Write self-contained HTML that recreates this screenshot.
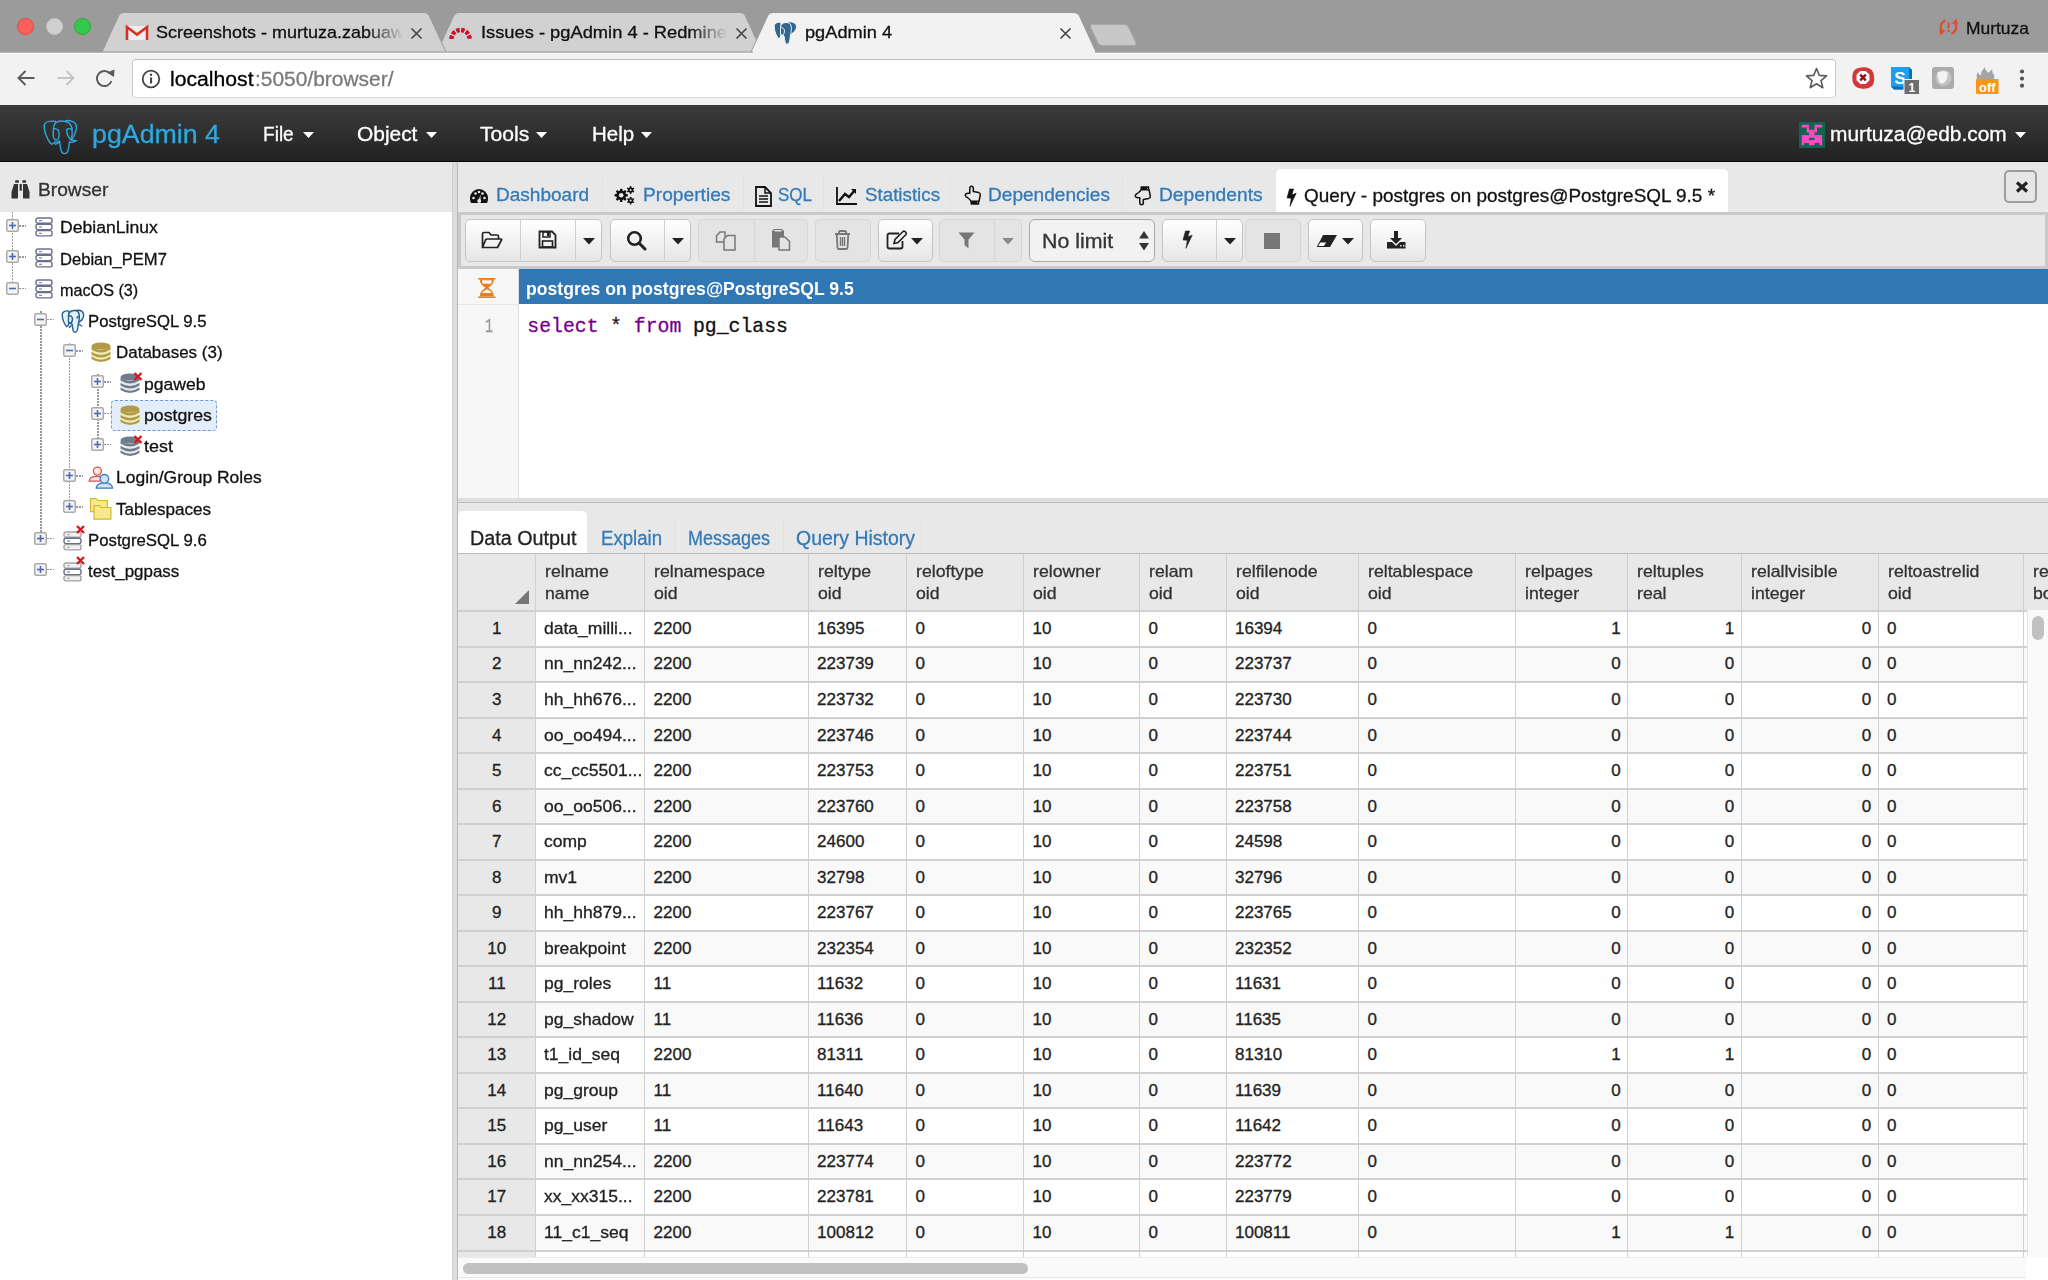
<!DOCTYPE html><html><head><meta charset="utf-8"><style>
html,body{margin:0;padding:0;width:2048px;height:1280px;overflow:hidden;background:#fff;font-family:"Liberation Sans",sans-serif}
.t{position:absolute;white-space:nowrap;line-height:1;transform-origin:0 0;-webkit-text-stroke:0.3px currentColor}
.r{position:absolute;box-sizing:border-box}
svg.r{overflow:visible}
</style></head><body>
<div class="r" style="left:0px;top:0px;width:2048px;height:52px;background:#9b9b9b"></div>
<div class="r" style="left:17.1px;top:18.3px;width:17px;height:17px;border-radius:50%;background:#fc605c;border:0.5px solid #e2463f"></div>
<div class="r" style="left:45.5px;top:18.3px;width:17px;height:17px;border-radius:50%;background:#d0d0d0;border:0.5px solid #c4c4c4"></div>
<div class="r" style="left:74.0px;top:18.3px;width:17px;height:17px;border-radius:50%;background:#34c84a;border:0.5px solid #28a83a"></div>
<svg class="r" style="left:0px;top:0px;" width="2048" height="53" viewBox="0 0 2048 53"><path d="M437,52 454,15 Q456,12.5 459,12.5 L740,12.5 Q743,12.5 745,15 L762,52 Z" fill="#d1d1d1" stroke="#9a9a9a" stroke-width="1"/></svg>
<svg class="r" style="left:0px;top:0px;" width="2048" height="53" viewBox="0 0 2048 53"><path d="M102,52 119,15 Q121,12.5 124,12.5 L424,12.5 Q427,12.5 429,15 L446,52 Z" fill="#d1d1d1" stroke="#9a9a9a" stroke-width="1"/></svg>
<svg class="r" style="left:1090px;top:23px;" width="48" height="24" viewBox="0 0 48 24"><path d="M2,1.5 L34,1.5 Q37,1.5 38.5,4 L46,20 Q47,22.5 44,22.5 L12,22.5 Q9,22.5 8,20 L0.5,4 Q0,1.5 2,1.5Z" fill="#c7c7c7" stroke="#a9a9a9" stroke-width="1"/></svg>
<svg class="r" style="left:0px;top:0px;" width="2048" height="53" viewBox="0 0 2048 53"><path d="M751,52 768,15 Q770,12.5 773,12.5 L1074,12.5 Q1077,12.5 1079,15 L1096,52 Z" fill="#f2f2f2" stroke="#999" stroke-width="1"/></svg>
<div class="r" style="left:0px;top:52px;width:2048px;height:53px;background:#f2f2f2;border-top:1px solid #b8b8b8;box-shadow:inset 0 1px 0 #fbfbfb"></div>
<div class="r" style="left:752.5px;top:51px;width:342px;height:3px;background:#f2f2f2"></div>
<svg class="r" style="left:126px;top:25px;" width="22" height="16" viewBox="0 0 22 16"><rect x="1" y="1" width="20" height="14" fill="#eee"/><path d="M1,15 V2 L11,9.5 L21,2 V15" fill="none" stroke="#d93025" stroke-width="2.6" stroke-linejoin="miter"/></svg>
<div class="t" style="left:156.00px;top:23.55px;font-size:17px;color:#111;transform:scaleX(1.0583);-webkit-mask-image:linear-gradient(90deg,#000 85%,transparent 100%)">Screenshots - murtuza.zabuaw</div>
<svg class="r" style="left:410px;top:27px;" width="13" height="13" viewBox="0 0 13 13"><path d="M1.5,1.5 L11.5,11.5 M11.5,1.5 L1.5,11.5" stroke="#444" stroke-width="1.6"/></svg>
<svg class="r" style="left:449px;top:23px;" width="24" height="17" viewBox="0 0 24 17"><path d="M2.5,16 A9,9 0 0 1 20.5,16" fill="none" stroke="#c8102e" stroke-width="4.5" stroke-dasharray="3.4 1.5"/></svg>
<div class="t" style="left:481.00px;top:23.55px;font-size:17px;color:#111;transform:scaleX(1.0759);-webkit-mask-image:linear-gradient(90deg,#000 85%,transparent 100%)">Issues - pgAdmin 4 - Redmine</div>
<svg class="r" style="left:735px;top:27px;" width="13" height="13" viewBox="0 0 13 13"><path d="M1.5,1.5 L11.5,11.5 M11.5,1.5 L1.5,11.5" stroke="#444" stroke-width="1.6"/></svg>
<svg class="r" style="left:773px;top:21px;" width="25" height="24" viewBox="0 0 25 24"><g fill="#336791" stroke="#fff" stroke-width="0.9" stroke-linejoin="round"><path d="M8,1.5 C4,0.5 1,2.5 1.2,6 C1.5,11 3.5,15 5.5,17.5 C6.5,18 7.5,16 7.8,15 Z"/><path d="M15,1 C18,0.5 22.5,1 23.5,5 C24,8 21,11.5 19,12.5 L17.5,14 Z"/><path d="M7.5,7.5 C7.5,4 9,1.8 13,1.5 C16.5,1.3 18,3 18.3,6 C18.6,9 18,12 17.5,14 C17,17 17,20 16,22 C15,23.7 13,23.7 12.3,22 C11.5,19.5 11.5,17 11,15 C10,14 8,14 7.5,13 Z"/><path d="M7.5,7 C9,6.5 10.5,7 11.2,8.5 C11.8,10.5 11.3,12.8 10,14" fill="none"/></g></svg>
<div class="t" style="left:805.00px;top:23.95px;font-size:17px;color:#111;transform:scaleX(1.0706);">pgAdmin 4</div>
<svg class="r" style="left:1059px;top:27px;" width="13" height="13" viewBox="0 0 13 13"><path d="M1.5,1.5 L11.5,11.5 M11.5,1.5 L1.5,11.5" stroke="#444" stroke-width="1.6"/></svg>
<svg class="r" style="left:1938px;top:17px;" width="22" height="20" viewBox="0 0 22 20"><g fill="#e24b36"><path d="M7.5,3.5 C3,5 1.5,10 4,14.5" fill="none" stroke="#e24b36" stroke-width="2.2"/><path d="M1,12.5 L7.5,13.5 L2.5,18.5 Z"/><path d="M13.5,16.5 C18,15 19.5,10 17,5.5" fill="none" stroke="#e24b36" stroke-width="2.2"/><path d="M20,7.5 L13.5,6.5 L18.5,1.5Z"/><rect x="9.6" y="5.5" width="2" height="6"/><circle cx="10.6" cy="14" r="1.2"/></g></svg>
<div class="t" style="left:1966.00px;top:19.55px;font-size:17px;color:#111;transform:scaleX(1.0251);">Murtuza</div>
<svg class="r" style="left:16px;top:69px;" width="20" height="18" viewBox="0 0 20 18"><path d="M18.5,9 H2.5 M9.5,2 L2.5,9 L9.5,16" fill="none" stroke="#5a5a5a" stroke-width="1.9"/></svg>
<svg class="r" style="left:56px;top:69px;" width="20" height="18" viewBox="0 0 20 18"><path d="M1.5,9 H17.5 M10.5,2 L17.5,9 L10.5,16" fill="none" stroke="#c4c4c4" stroke-width="1.9"/></svg>
<svg class="r" style="left:96px;top:69px;" width="20" height="20" viewBox="0 0 20 20"><path d="M15.5,12 A7.5,7.5 0 1 1 14,4.5" fill="none" stroke="#5a5a5a" stroke-width="1.9"/><path d="M11,3.5 L18.5,0.5 L18,8 Z" fill="#5a5a5a"/></svg>
<div class="r" style="left:132px;top:59px;width:1704px;height:38.5px;background:#fff;border:1px solid #c9c9c9;border-top-color:#bdbdbd;border-bottom-color:#d9d9d9;border-radius:4px"></div>
<svg class="r" style="left:141px;top:69px;" width="20" height="20" viewBox="0 0 20 20"><circle cx="10" cy="10" r="8.3" fill="none" stroke="#444" stroke-width="1.8"/><rect x="9" y="8.5" width="2.1" height="6" fill="#444"/><circle cx="10" cy="5.8" r="1.2" fill="#444"/></svg>
<div class="t" style="left:170.00px;top:69.83px;font-size:19.5px;color:#000;transform:scaleX(1.0854);">localhost</div>
<div class="t" style="left:254.50px;top:69.83px;font-size:19.5px;color:#7a7a7a;transform:scaleX(1.0737);">:5050/browser/</div>
<svg class="r" style="left:1805px;top:67px;" width="23" height="22" viewBox="0 0 23 22"><path d="M11.5,1.5 L14.3,8.4 L21.6,8.9 L16,13.6 L17.8,20.7 L11.5,16.8 L5.2,20.7 L7,13.6 L1.4,8.9 L8.7,8.4 Z" fill="none" stroke="#5a5a5a" stroke-width="1.6" stroke-linejoin="round"/></svg>
<svg class="r" style="left:1851px;top:66px;" width="24" height="24" viewBox="0 0 24 24"><path d="M10,1.5 Q19,0.5 22,6 Q24.5,13 22,19 Q18,23.5 10,22.5 Q3,22 1.5,15 Q0.5,7 4,3.5 Q6,1.8 10,1.5Z" fill="#d2373c"/><path d="M9.3,5 H14.7 L18.5,8.8 V14.2 L14.7,18 H9.3 L5.5,14.2 V8.8 Z" fill="#fff"/><path d="M9.2,8.7 L14.8,14.3 M14.8,8.7 L9.2,14.3" stroke="#8d1116" stroke-width="2.4"/></svg>
<svg class="r" style="left:1890px;top:66px;" width="32" height="30" viewBox="0 0 32 30"><path d="M1,1 H19 L22,4 V21 L19,23.5 H4 L1,20.5 Z" fill="#1aa0ee"/><path d="M1,20.5 L4,23.5 H19 L22,21 V4 L19,1 V20.5 Z" fill="#0e6bb0"/><text x="10" y="17.5" font-family="Liberation Sans" font-weight="700" font-size="17" fill="#fff" text-anchor="middle">S</text><rect x="14" y="13.5" width="15.5" height="15" rx="1" fill="#6e6e6e" stroke="#f2f2f2" stroke-width="1"/><text x="21.8" y="26" font-family="Liberation Sans" font-weight="700" font-size="12" fill="#fff" text-anchor="middle">1</text></svg>
<svg class="r" style="left:1931px;top:66px;" width="24" height="24" viewBox="0 0 24 24"><rect x="1" y="1" width="22" height="22" rx="3" fill="#ababab"/><circle cx="12.5" cy="12" r="8" fill="#c4c4c4"/><path d="M6.5,6.5 Q12,4.5 16.5,6 Q17,12 14,16 Q12,18 9,17 Q6,12 6.5,6.5Z" fill="#f4f4f4"/></svg>
<svg class="r" style="left:1972px;top:66px;" width="30" height="30" viewBox="0 0 30 30"><path d="M6,15 Q3,10 6,6 Q6.5,9 8.5,9.5 Q9,5 12.5,1.5 Q14,5 16.5,7 Q18.5,4 20,3.5 Q20,7 22,8.5 Q23,11 21,15Z" fill="#a4a4a4"/><rect x="4" y="13" width="22.5" height="15" rx="1" fill="#f7941e"/><text x="15.3" y="25.5" font-family="Liberation Sans" font-weight="700" font-size="13" fill="#fff" text-anchor="middle">off</text></svg>
<svg class="r" style="left:2017px;top:69px;" width="10" height="20" viewBox="0 0 10 20"><circle cx="5" cy="2.5" r="2.1" fill="#555"/><circle cx="5" cy="9.6" r="2.1" fill="#555"/><circle cx="5" cy="16.7" r="2.1" fill="#555"/></svg>
<div class="r" style="left:0px;top:105px;width:2048px;height:57px;background:linear-gradient(#3c3c3c,#222);border-bottom:1px solid #080808"></div>
<svg class="r" style="left:38px;top:114px;" width="48" height="46" viewBox="0 0 48 46"><g fill="none" stroke="#2ea8df" stroke-width="1.35" stroke-linecap="round" stroke-linejoin="round"><path d="M17.5,7.5 C12,6.5 7,7.5 6.3,11 C5.5,16 9,25 12.6,29.5 C14,31 16,29 17,27.5"/><path d="M15.5,15 C15.5,9 19,7 23.5,7 C29,7 33,9.5 34,14 C34.5,18 34,23 33.3,26"/><path d="M27.5,6.8 C31,6 36.5,7 38,10.5 C39.5,14 37,21 33.5,26 C35,26.5 37.5,27 38.5,26.5 C37,28 33,29 31.5,28"/><path d="M21.5,27.5 C22,31 22.5,36 24,38.5 C25.5,40 28,40 29.5,38 C31,35 31,31 31.5,28"/><path d="M15.5,15 C16,14.5 19,14.5 20.5,16.5 C21.5,19 21,24 20,25.5 C18.5,26.5 16.5,26 15.5,23.5 C15,21 15.2,17 15.5,15"/><path d="M16,29.5 L21.5,27 M17.5,30.5 L22,28"/><path d="M28.5,15.5 C30,14.5 32.5,14.5 33.5,15.5 M29,16 C28.5,19 30,23 33,26"/></g></svg>
<div class="t" style="left:92.00px;top:122.44px;font-size:25.6px;color:#2ea8df;transform:scaleX(1.0460);">pgAdmin 4</div>
<div class="t" style="left:263.30px;top:124.00px;font-size:20px;color:#fff;transform:scaleX(0.9534);">File</div>
<svg class="r" style="left:303.0px;top:131.7px;" width="11" height="6" viewBox="0 0 11 6"><path d="M0,0 H11 L5.5,6 Z" fill="#fff"/></svg>
<div class="t" style="left:356.60px;top:124.00px;font-size:20px;color:#fff;transform:scaleX(1.0450);">Object</div>
<svg class="r" style="left:425.5px;top:131.7px;" width="11" height="6" viewBox="0 0 11 6"><path d="M0,0 H11 L5.5,6 Z" fill="#fff"/></svg>
<div class="t" style="left:479.70px;top:124.00px;font-size:20px;color:#fff;transform:scaleX(1.0557);">Tools</div>
<svg class="r" style="left:536.0px;top:131.7px;" width="11" height="6" viewBox="0 0 11 6"><path d="M0,0 H11 L5.5,6 Z" fill="#fff"/></svg>
<div class="t" style="left:591.50px;top:124.00px;font-size:20px;color:#fff;transform:scaleX(1.0219);">Help</div>
<svg class="r" style="left:641.0px;top:131.7px;" width="11" height="6" viewBox="0 0 11 6"><path d="M0,0 H11 L5.5,6 Z" fill="#fff"/></svg>
<svg class="r" style="left:1799px;top:122px;" width="26" height="26" viewBox="0 0 26 26"><rect width="26" height="26" fill="#116352"/><g fill="#fd4ac2"><rect x="2.75" y="2.75" width="7.25" height="2.75"/><rect x="15.5" y="2.75" width="7.6" height="2.75"/><rect x="7.75" y="5.5" width="2.25" height="5"/><rect x="15.5" y="5.5" width="2.5" height="5"/><rect x="10" y="7.75" width="5.5" height="5.5"/><rect x="2.75" y="13.1" width="20.35" height="7.9"/><rect x="2.75" y="21" width="2.25" height="2.25"/><rect x="10" y="21" width="5.5" height="2.25"/><rect x="20.5" y="21" width="2.6" height="2.25"/></g><rect x="10" y="15.75" width="5.5" height="2.35" fill="#116352"/></svg>
<div class="t" style="left:1830.00px;top:124.00px;font-size:20px;color:#fff;transform:scaleX(1.0437);">murtuza@edb.com</div>
<svg class="r" style="left:2015px;top:131.7px;" width="11" height="6" viewBox="0 0 11 6"><path d="M0,0 H11 L5.5,6 Z" fill="#fff"/></svg>
<div class="r" style="left:0px;top:162px;width:452px;height:50px;background:#e8e8e8"></div>
<svg class="r" style="left:6px;top:175px;" width="30" height="30" viewBox="0 0 30 30"><g fill="#333"><rect x="9.1" y="5.2" width="3.8" height="2.5" rx="0.8"/><rect x="16.3" y="5.2" width="3.8" height="2.5" rx="0.8"/><path d="M8,9 H12 V23.5 H5.5 V17 Z"/><path d="M17,9 H21 L23.5,17 V23.5 H17 Z"/><rect x="13.6" y="9" width="2.2" height="6.7"/></g></svg>
<div class="t" style="left:38.00px;top:181.28px;font-size:18.5px;color:#333;transform:scaleX(1.0369);">Browser</div>
<div class="r" style="left:452px;top:162px;width:6px;height:1118px;background:#dcdcdc;border-right:1.5px solid #b9b9b9;border-left:1px solid #d0d0d0"></div>
<div class="r" style="left:11.5px;top:212px;width:1.5px;height:70.10000000000002px;background-image:linear-gradient(#999 60%,transparent 60%);background-size:2px 3px"></div>
<div class="r" style="left:40px;top:311.35px;width:1.5px;height:220.75px;background-image:linear-gradient(#999 60%,transparent 60%);background-size:2px 3px"></div>
<div class="r" style="left:68.5px;top:342.6px;width:1.5px;height:158.25px;background-image:linear-gradient(#999 60%,transparent 60%);background-size:2px 3px"></div>
<div class="r" style="left:97px;top:373.85px;width:1.5px;height:64.5px;background-image:linear-gradient(#999 60%,transparent 60%);background-size:2px 3px"></div>
<div class="r" style="left:111.4px;top:400px;width:105.6px;height:30.5px;background:#e3eefa;border:1.5px dashed #6a9bd8;border-radius:4px"></div>
<svg class="r" style="left:6.0px;top:219.1px;" width="13" height="13" viewBox="0 0 13 13"><rect x="0.75" y="0.75" width="11.5" height="11.5" rx="1.5" fill="#f4f4f4" stroke="#a9a9a9" stroke-width="1.5"/><path d="M3,6.5 H10" stroke="#4d6ab3" stroke-width="1.6"/><path d="M6.5,3 V10" stroke="#4d6ab3" stroke-width="1.6"/></svg>
<div class="r" style="left:19.0px;top:225.1px;width:7px;height:1.5px;background-image:linear-gradient(90deg,#999 60%,transparent 60%);background-size:3px 2px"></div>
<svg class="r" style="left:35.0px;top:216.6px;" width="18" height="21" viewBox="0 0 18 21"><rect x="1" y="1.0" width="16" height="5.3" rx="2" fill="#fff" stroke="#6d6d8c" stroke-width="1.4"/><rect x="4" y="3.2" width="3" height="1" fill="#6d6d8c"/><rect x="1" y="7.3" width="16" height="5.3" rx="2" fill="#fff" stroke="#6d6d8c" stroke-width="1.4"/><rect x="4" y="9.5" width="3" height="1" fill="#6d6d8c"/><rect x="1" y="13.6" width="16" height="5.3" rx="2" fill="#fff" stroke="#6d6d8c" stroke-width="1.4"/><rect x="4" y="15.8" width="3" height="1" fill="#6d6d8c"/></svg>
<div class="t" style="left:60.00px;top:219.28px;font-size:17.2px;color:#111;transform:scaleX(1.0237);">DebianLinux</div>
<svg class="r" style="left:6.0px;top:250.35000000000002px;" width="13" height="13" viewBox="0 0 13 13"><rect x="0.75" y="0.75" width="11.5" height="11.5" rx="1.5" fill="#f4f4f4" stroke="#a9a9a9" stroke-width="1.5"/><path d="M3,6.5 H10" stroke="#4d6ab3" stroke-width="1.6"/><path d="M6.5,3 V10" stroke="#4d6ab3" stroke-width="1.6"/></svg>
<div class="r" style="left:19.0px;top:256.35px;width:7px;height:1.5px;background-image:linear-gradient(90deg,#999 60%,transparent 60%);background-size:3px 2px"></div>
<svg class="r" style="left:35.0px;top:247.85000000000002px;" width="18" height="21" viewBox="0 0 18 21"><rect x="1" y="1.0" width="16" height="5.3" rx="2" fill="#fff" stroke="#6d6d8c" stroke-width="1.4"/><rect x="4" y="3.2" width="3" height="1" fill="#6d6d8c"/><rect x="1" y="7.3" width="16" height="5.3" rx="2" fill="#fff" stroke="#6d6d8c" stroke-width="1.4"/><rect x="4" y="9.5" width="3" height="1" fill="#6d6d8c"/><rect x="1" y="13.6" width="16" height="5.3" rx="2" fill="#fff" stroke="#6d6d8c" stroke-width="1.4"/><rect x="4" y="15.8" width="3" height="1" fill="#6d6d8c"/></svg>
<div class="t" style="left:60.00px;top:250.53px;font-size:17.2px;color:#111;transform:scaleX(0.9645);">Debian_PEM7</div>
<svg class="r" style="left:6.0px;top:281.6px;" width="13" height="13" viewBox="0 0 13 13"><rect x="0.75" y="0.75" width="11.5" height="11.5" rx="1.5" fill="#f4f4f4" stroke="#a9a9a9" stroke-width="1.5"/><path d="M3,6.5 H10" stroke="#4d6ab3" stroke-width="1.6"/></svg>
<div class="r" style="left:19.0px;top:287.6px;width:7px;height:1.5px;background-image:linear-gradient(90deg,#999 60%,transparent 60%);background-size:3px 2px"></div>
<svg class="r" style="left:35.0px;top:279.1px;" width="18" height="21" viewBox="0 0 18 21"><rect x="1" y="1.0" width="16" height="5.3" rx="2" fill="#fff" stroke="#6d6d8c" stroke-width="1.4"/><rect x="4" y="3.2" width="3" height="1" fill="#6d6d8c"/><rect x="1" y="7.3" width="16" height="5.3" rx="2" fill="#fff" stroke="#6d6d8c" stroke-width="1.4"/><rect x="4" y="9.5" width="3" height="1" fill="#6d6d8c"/><rect x="1" y="13.6" width="16" height="5.3" rx="2" fill="#fff" stroke="#6d6d8c" stroke-width="1.4"/><rect x="4" y="15.8" width="3" height="1" fill="#6d6d8c"/></svg>
<div class="t" style="left:60.00px;top:281.78px;font-size:17.2px;color:#111;transform:scaleX(0.9415);">macOS (3)</div>
<svg class="r" style="left:34.3px;top:312.85px;" width="13" height="13" viewBox="0 0 13 13"><rect x="0.75" y="0.75" width="11.5" height="11.5" rx="1.5" fill="#f4f4f4" stroke="#a9a9a9" stroke-width="1.5"/><path d="M3,6.5 H10" stroke="#4d6ab3" stroke-width="1.6"/></svg>
<div class="r" style="left:47.3px;top:318.85px;width:7px;height:1.5px;background-image:linear-gradient(90deg,#999 60%,transparent 60%);background-size:3px 2px"></div>
<svg class="r" style="left:56px;top:303.65000000000003px;" width="34" height="32" viewBox="0 0 34 32"><g fill="#dff3fc" stroke="#2a5e8c" stroke-width="1.4" stroke-linejoin="round" stroke-linecap="round"><path d="M13,7.2 C9,6 6,8 6.2,11 C6.5,16 8.5,20 10.5,22.5 C11.5,23 12.5,21 12.8,20 Z"/><path d="M20,6.5 C23,6 26.5,6.5 27.5,10 C28,13 26,16 24,17.5 L22.5,19 L21.5,13 Z"/><path d="M12.5,12.5 C12.5,9 14,6.8 18,6.5 C21.5,6.3 23,8 23.3,11 C23.6,14 23,17 22.5,19 C22,22 22,25 21,27 C20,28.7 18,28.7 17.3,27 C16.5,24.5 16.5,22 16,20 C15,19 13,19 12.5,18 Z"/><path d="M12.5,12 C14,11.5 15.5,12 16.2,13.5 C16.8,15.5 16.3,17.8 15,19 C14,19.5 13,19 12.5,18.5" fill="none"/><path d="M21,14 C21.5,12.5 22.5,12.3 23.3,12.5" fill="none"/><path d="M13.5,23.5 L15,21.5 M23,20.5 L25.8,22" fill="none"/></g></svg>
<div class="t" style="left:88.10px;top:313.03px;font-size:17.2px;color:#111;transform:scaleX(0.9747);">PostgreSQL 9.5</div>
<svg class="r" style="left:62.6px;top:344.1px;" width="13" height="13" viewBox="0 0 13 13"><rect x="0.75" y="0.75" width="11.5" height="11.5" rx="1.5" fill="#f4f4f4" stroke="#a9a9a9" stroke-width="1.5"/><path d="M3,6.5 H10" stroke="#4d6ab3" stroke-width="1.6"/></svg>
<div class="r" style="left:75.6px;top:350.1px;width:7px;height:1.5px;background-image:linear-gradient(90deg,#999 60%,transparent 60%);background-size:3px 2px"></div>
<svg class="r" style="left:91.4px;top:342.1px;" width="22" height="22" viewBox="0 0 22 22"><path d="M0.5,4 V15 Q10,21 19.5,15 V4 Z" fill="#f1e9b8"/><ellipse cx="10" cy="4" rx="9.5" ry="3.6" fill="#b09a45"/><path d="M0.5,5 Q10,11 19.5,5 V7.5 Q10,13.5 0.5,7.5 Z" fill="#b09a45"/><path d="M0.5,10 Q10,16 19.5,10 V12.5 Q10,18.5 0.5,12.5 Z" fill="#b09a45"/><path d="M0.5,14.5 Q10,21 19.5,14.5 V17 Q10,23 0.5,17 Z" fill="#b09a45"/></svg>
<div class="t" style="left:116.20px;top:344.28px;font-size:17.2px;color:#111;transform:scaleX(0.9869);">Databases (3)</div>
<svg class="r" style="left:90.9px;top:375.35px;" width="13" height="13" viewBox="0 0 13 13"><rect x="0.75" y="0.75" width="11.5" height="11.5" rx="1.5" fill="#f4f4f4" stroke="#a9a9a9" stroke-width="1.5"/><path d="M3,6.5 H10" stroke="#4d6ab3" stroke-width="1.6"/><path d="M6.5,3 V10" stroke="#4d6ab3" stroke-width="1.6"/></svg>
<div class="r" style="left:103.9px;top:381.35px;width:7px;height:1.5px;background-image:linear-gradient(90deg,#999 60%,transparent 60%);background-size:3px 2px"></div>
<svg class="r" style="left:119.6px;top:373.35px;" width="22" height="22" viewBox="0 0 22 22"><path d="M0.5,4 V15 Q10,21 19.5,15 V4 Z" fill="#e8ecef"/><ellipse cx="10" cy="4" rx="9.5" ry="3.6" fill="#6f7d8b"/><path d="M0.5,5 Q10,11 19.5,5 V7.5 Q10,13.5 0.5,7.5 Z" fill="#6f7d8b"/><path d="M0.5,10 Q10,16 19.5,10 V12.5 Q10,18.5 0.5,12.5 Z" fill="#6f7d8b"/><path d="M0.5,14.5 Q10,21 19.5,14.5 V17 Q10,23 0.5,17 Z" fill="#6f7d8b"/><path d="M14.5,0 L21.5,7 M21.5,0 L14.5,7" stroke="#d9161e" stroke-width="2.4"/></svg>
<div class="t" style="left:144.30px;top:375.53px;font-size:17.2px;color:#111;transform:scaleX(1.0201);">pgaweb</div>
<svg class="r" style="left:90.9px;top:406.6px;" width="13" height="13" viewBox="0 0 13 13"><rect x="0.75" y="0.75" width="11.5" height="11.5" rx="1.5" fill="#f4f4f4" stroke="#a9a9a9" stroke-width="1.5"/><path d="M3,6.5 H10" stroke="#4d6ab3" stroke-width="1.6"/><path d="M6.5,3 V10" stroke="#4d6ab3" stroke-width="1.6"/></svg>
<div class="r" style="left:103.9px;top:412.6px;width:7px;height:1.5px;background-image:linear-gradient(90deg,#999 60%,transparent 60%);background-size:3px 2px"></div>
<svg class="r" style="left:120.1px;top:404.6px;" width="22" height="22" viewBox="0 0 22 22"><path d="M0.5,4 V15 Q10,21 19.5,15 V4 Z" fill="#f1e9b8"/><ellipse cx="10" cy="4" rx="9.5" ry="3.6" fill="#b09a45"/><path d="M0.5,5 Q10,11 19.5,5 V7.5 Q10,13.5 0.5,7.5 Z" fill="#b09a45"/><path d="M0.5,10 Q10,16 19.5,10 V12.5 Q10,18.5 0.5,12.5 Z" fill="#b09a45"/><path d="M0.5,14.5 Q10,21 19.5,14.5 V17 Q10,23 0.5,17 Z" fill="#b09a45"/></svg>
<div class="t" style="left:144.30px;top:406.78px;font-size:17.2px;color:#111;transform:scaleX(1.0294);">postgres</div>
<svg class="r" style="left:90.9px;top:437.85px;" width="13" height="13" viewBox="0 0 13 13"><rect x="0.75" y="0.75" width="11.5" height="11.5" rx="1.5" fill="#f4f4f4" stroke="#a9a9a9" stroke-width="1.5"/><path d="M3,6.5 H10" stroke="#4d6ab3" stroke-width="1.6"/><path d="M6.5,3 V10" stroke="#4d6ab3" stroke-width="1.6"/></svg>
<div class="r" style="left:103.9px;top:443.85px;width:7px;height:1.5px;background-image:linear-gradient(90deg,#999 60%,transparent 60%);background-size:3px 2px"></div>
<svg class="r" style="left:119.6px;top:435.85px;" width="22" height="22" viewBox="0 0 22 22"><path d="M0.5,4 V15 Q10,21 19.5,15 V4 Z" fill="#e8ecef"/><ellipse cx="10" cy="4" rx="9.5" ry="3.6" fill="#6f7d8b"/><path d="M0.5,5 Q10,11 19.5,5 V7.5 Q10,13.5 0.5,7.5 Z" fill="#6f7d8b"/><path d="M0.5,10 Q10,16 19.5,10 V12.5 Q10,18.5 0.5,12.5 Z" fill="#6f7d8b"/><path d="M0.5,14.5 Q10,21 19.5,14.5 V17 Q10,23 0.5,17 Z" fill="#6f7d8b"/><path d="M14.5,0 L21.5,7 M21.5,0 L14.5,7" stroke="#d9161e" stroke-width="2.4"/></svg>
<div class="t" style="left:144.30px;top:438.03px;font-size:17.2px;color:#111;transform:scaleX(1.0436);">test</div>
<svg class="r" style="left:62.6px;top:469.1px;" width="13" height="13" viewBox="0 0 13 13"><rect x="0.75" y="0.75" width="11.5" height="11.5" rx="1.5" fill="#f4f4f4" stroke="#a9a9a9" stroke-width="1.5"/><path d="M3,6.5 H10" stroke="#4d6ab3" stroke-width="1.6"/><path d="M6.5,3 V10" stroke="#4d6ab3" stroke-width="1.6"/></svg>
<div class="r" style="left:75.6px;top:475.1px;width:7px;height:1.5px;background-image:linear-gradient(90deg,#999 60%,transparent 60%);background-size:3px 2px"></div>
<svg class="r" style="left:86px;top:462px;" width="30" height="30" viewBox="0 0 30 30"><path d="M3.2,19.1 Q3.5,14.4 11.4,14.4 Q17,14.4 17.5,19.1 Z" fill="#fde6e6" stroke="#d9534f" stroke-width="1.3"/><circle cx="11.4" cy="9.1" r="4" fill="#fde6e6" stroke="#d9534f" stroke-width="1.3"/><path d="M10.2,26.1 Q10.8,20.9 18.4,20.9 Q26,20.9 26.6,26.1 Z" fill="#cfe3f7" stroke="#3b7bc8" stroke-width="1.3"/><circle cx="18.4" cy="16.8" r="4.3" fill="#cfe3f7" stroke="#3b7bc8" stroke-width="1.3"/></svg>
<div class="t" style="left:116.20px;top:469.28px;font-size:17.2px;color:#111;transform:scaleX(1.0164);">Login/Group Roles</div>
<svg class="r" style="left:62.6px;top:500.35px;" width="13" height="13" viewBox="0 0 13 13"><rect x="0.75" y="0.75" width="11.5" height="11.5" rx="1.5" fill="#f4f4f4" stroke="#a9a9a9" stroke-width="1.5"/><path d="M3,6.5 H10" stroke="#4d6ab3" stroke-width="1.6"/><path d="M6.5,3 V10" stroke="#4d6ab3" stroke-width="1.6"/></svg>
<div class="r" style="left:75.6px;top:506.35px;width:7px;height:1.5px;background-image:linear-gradient(90deg,#999 60%,transparent 60%);background-size:3px 2px"></div>
<svg class="r" style="left:86px;top:494px;" width="30" height="30" viewBox="0 0 30 30"><path d="M4.5,4.7 H10 L11.5,6.5 H21.3 V17.6 H4.5 Z" fill="#f7e98c" stroke="#d2b93a" stroke-width="1.2"/><path d="M8,11.7 H13.5 L15,13.5 H24.9 V25.2 H8 Z" fill="#f7e98c" stroke="#d2b93a" stroke-width="1.2"/></svg>
<div class="t" style="left:116.20px;top:500.53px;font-size:17.2px;color:#111;transform:scaleX(0.9955);">Tablespaces</div>
<svg class="r" style="left:34.3px;top:531.6px;" width="13" height="13" viewBox="0 0 13 13"><rect x="0.75" y="0.75" width="11.5" height="11.5" rx="1.5" fill="#f4f4f4" stroke="#a9a9a9" stroke-width="1.5"/><path d="M3,6.5 H10" stroke="#4d6ab3" stroke-width="1.6"/><path d="M6.5,3 V10" stroke="#4d6ab3" stroke-width="1.6"/></svg>
<div class="r" style="left:47.3px;top:537.6px;width:7px;height:1.5px;background-image:linear-gradient(90deg,#999 60%,transparent 60%);background-size:3px 2px"></div>
<svg class="r" style="left:62.7px;top:530.6px;" width="19" height="21" viewBox="0 0 19 21"><rect x="1" y="1.0" width="17" height="5.3" rx="2" fill="#f2f2f2" stroke="#a3a3a3" stroke-width="1.4"/><rect x="4" y="3.2" width="3" height="1" fill="#a3a3a3"/><rect x="1" y="7.3" width="17" height="5.3" rx="2" fill="#fff" stroke="#6d6d8c" stroke-width="1.4"/><rect x="4" y="9.5" width="3" height="1" fill="#6d6d8c"/><rect x="1" y="13.6" width="17" height="5.3" rx="2" fill="#f2f2f2" stroke="#a3a3a3" stroke-width="1.4"/><rect x="4" y="15.8" width="3" height="1" fill="#a3a3a3"/></svg>
<svg class="r" style="left:75.7px;top:525.1px;" width="9" height="9" viewBox="0 0 9 9"><path d="M1,1 L8,8 M8,1 L1,8" stroke="#d9161e" stroke-width="2.4"/></svg>
<div class="t" style="left:88.10px;top:531.78px;font-size:17.2px;color:#111;transform:scaleX(0.9764);">PostgreSQL 9.6</div>
<svg class="r" style="left:34.3px;top:562.85px;" width="13" height="13" viewBox="0 0 13 13"><rect x="0.75" y="0.75" width="11.5" height="11.5" rx="1.5" fill="#f4f4f4" stroke="#a9a9a9" stroke-width="1.5"/><path d="M3,6.5 H10" stroke="#4d6ab3" stroke-width="1.6"/><path d="M6.5,3 V10" stroke="#4d6ab3" stroke-width="1.6"/></svg>
<div class="r" style="left:47.3px;top:568.85px;width:7px;height:1.5px;background-image:linear-gradient(90deg,#999 60%,transparent 60%);background-size:3px 2px"></div>
<svg class="r" style="left:62.7px;top:561.85px;" width="19" height="21" viewBox="0 0 19 21"><rect x="1" y="1.0" width="17" height="5.3" rx="2" fill="#f2f2f2" stroke="#a3a3a3" stroke-width="1.4"/><rect x="4" y="3.2" width="3" height="1" fill="#a3a3a3"/><rect x="1" y="7.3" width="17" height="5.3" rx="2" fill="#fff" stroke="#6d6d8c" stroke-width="1.4"/><rect x="4" y="9.5" width="3" height="1" fill="#6d6d8c"/><rect x="1" y="13.6" width="17" height="5.3" rx="2" fill="#f2f2f2" stroke="#a3a3a3" stroke-width="1.4"/><rect x="4" y="15.8" width="3" height="1" fill="#a3a3a3"/></svg>
<svg class="r" style="left:75.7px;top:556.35px;" width="9" height="9" viewBox="0 0 9 9"><path d="M1,1 L8,8 M8,1 L1,8" stroke="#d9161e" stroke-width="2.4"/></svg>
<div class="t" style="left:88.10px;top:563.03px;font-size:17.2px;color:#111;transform:scaleX(0.9839);">test_pgpass</div>
<div class="r" style="left:458px;top:162px;width:1590px;height:50px;background:#e8e8e8"></div>
<div class="r" style="left:458px;top:211.5px;width:1590px;height:57.5px;background:#c9c9c9"></div>
<div class="r" style="left:461px;top:215px;width:1584px;height:50.8px;background:#e8e8e8"></div>
<div class="r" style="left:458px;top:269px;width:61px;height:229px;background:#f7f7f7;border-right:1px solid #ddd"></div>
<div class="r" style="left:519px;top:269px;width:1529px;height:35px;background:#3177b4"></div>
<div class="r" style="left:458px;top:303.5px;width:61px;height:1px;background:#e6e6e6"></div>
<div class="r" style="left:458px;top:498px;width:1590px;height:5px;background:#dedede;border-bottom:1px solid #c0c0c0"></div>
<div class="r" style="left:458px;top:503px;width:1590px;height:50.5px;background:#e8e8e8"></div>
<div class="r" style="left:458px;top:552.5px;width:1590px;height:2px;background:#bcbcbc"></div>
<div class="r" style="left:602px;top:177px;width:1px;height:35px;background:#e2e2e2"></div>
<div class="r" style="left:743px;top:177px;width:1px;height:35px;background:#e2e2e2"></div>
<div class="r" style="left:823px;top:177px;width:1px;height:35px;background:#e2e2e2"></div>
<div class="r" style="left:950px;top:177px;width:1px;height:35px;background:#e2e2e2"></div>
<div class="r" style="left:1122px;top:177px;width:1px;height:35px;background:#e2e2e2"></div>
<div class="r" style="left:1276px;top:169.3px;width:452px;height:43px;background:#fff;border-radius:5px 5px 0 0"></div>
<svg class="r" style="left:469px;top:188px;" width="20" height="16" viewBox="0 0 20 16"><path d="M10,1 A9,9 0 0 0 1,10 Q1,13 2,15 H18 Q19,13 19,10 A9,9 0 0 0 10,1Z" fill="#111"/><circle cx="4.5" cy="10" r="1.3" fill="#e8e8e8"/><circle cx="6.5" cy="5.5" r="1.3" fill="#e8e8e8"/><circle cx="10" cy="4" r="1.3" fill="#e8e8e8"/><circle cx="15.5" cy="10" r="1.3" fill="#e8e8e8"/><circle cx="13.5" cy="5.5" r="1.3" fill="#e8e8e8"/><path d="M9,14 L11.5,6.5 L11.5,14Z" fill="#e8e8e8"/><circle cx="10.2" cy="13" r="2" fill="#e8e8e8"/></svg>
<div class="t" style="left:496.00px;top:185.88px;font-size:18.5px;color:#337ab7;transform:scaleX(1.0280);">Dashboard</div>
<svg class="r" style="left:610px;top:182px;" width="30" height="28" viewBox="0 0 30 28"><circle cx="11.2" cy="13.3" r="4.9" fill="#111"/><rect x="10.00" y="6.70" width="2.4" height="2.50" rx="0.5" fill="#111" transform="rotate(0.0 11.2 13.3)"/><rect x="10.00" y="6.70" width="2.4" height="2.50" rx="0.5" fill="#111" transform="rotate(45.0 11.2 13.3)"/><rect x="10.00" y="6.70" width="2.4" height="2.50" rx="0.5" fill="#111" transform="rotate(90.0 11.2 13.3)"/><rect x="10.00" y="6.70" width="2.4" height="2.50" rx="0.5" fill="#111" transform="rotate(135.0 11.2 13.3)"/><rect x="10.00" y="6.70" width="2.4" height="2.50" rx="0.5" fill="#111" transform="rotate(180.0 11.2 13.3)"/><rect x="10.00" y="6.70" width="2.4" height="2.50" rx="0.5" fill="#111" transform="rotate(225.0 11.2 13.3)"/><rect x="10.00" y="6.70" width="2.4" height="2.50" rx="0.5" fill="#111" transform="rotate(270.0 11.2 13.3)"/><rect x="10.00" y="6.70" width="2.4" height="2.50" rx="0.5" fill="#111" transform="rotate(315.0 11.2 13.3)"/><circle cx="11.2" cy="13.3" r="2.3" fill="#e8e8e8"/><circle cx="20.6" cy="8" r="2.7" fill="#111"/><rect x="19.85" y="4.10" width="1.5" height="2.00" rx="0.5" fill="#111" transform="rotate(0.0 20.6 8)"/><rect x="19.85" y="4.10" width="1.5" height="2.00" rx="0.5" fill="#111" transform="rotate(60.0 20.6 8)"/><rect x="19.85" y="4.10" width="1.5" height="2.00" rx="0.5" fill="#111" transform="rotate(120.0 20.6 8)"/><rect x="19.85" y="4.10" width="1.5" height="2.00" rx="0.5" fill="#111" transform="rotate(180.0 20.6 8)"/><rect x="19.85" y="4.10" width="1.5" height="2.00" rx="0.5" fill="#111" transform="rotate(240.0 20.6 8)"/><rect x="19.85" y="4.10" width="1.5" height="2.00" rx="0.5" fill="#111" transform="rotate(300.0 20.6 8)"/><circle cx="20.6" cy="8" r="1.0" fill="#e8e8e8"/><circle cx="20.6" cy="18.6" r="2.7" fill="#111"/><rect x="19.85" y="14.70" width="1.5" height="2.00" rx="0.5" fill="#111" transform="rotate(0.0 20.6 18.6)"/><rect x="19.85" y="14.70" width="1.5" height="2.00" rx="0.5" fill="#111" transform="rotate(60.0 20.6 18.6)"/><rect x="19.85" y="14.70" width="1.5" height="2.00" rx="0.5" fill="#111" transform="rotate(120.0 20.6 18.6)"/><rect x="19.85" y="14.70" width="1.5" height="2.00" rx="0.5" fill="#111" transform="rotate(180.0 20.6 18.6)"/><rect x="19.85" y="14.70" width="1.5" height="2.00" rx="0.5" fill="#111" transform="rotate(240.0 20.6 18.6)"/><rect x="19.85" y="14.70" width="1.5" height="2.00" rx="0.5" fill="#111" transform="rotate(300.0 20.6 18.6)"/><circle cx="20.6" cy="18.6" r="1.0" fill="#e8e8e8"/></svg>
<div class="t" style="left:642.50px;top:185.88px;font-size:18.5px;color:#337ab7;transform:scaleX(1.0372);">Properties</div>
<svg class="r" style="left:755px;top:186px;" width="17" height="21" viewBox="0 0 17 21"><path d="M1,1 H10 L16,7 V20 H1 Z" fill="none" stroke="#111" stroke-width="1.8"/><path d="M10,1 V7 H16" fill="none" stroke="#111" stroke-width="1.5"/><path d="M4,10 H13 M4,13 H13 M4,16 H13" stroke="#111" stroke-width="1.3"/></svg>
<div class="t" style="left:778.00px;top:185.88px;font-size:18.5px;color:#337ab7;transform:scaleX(0.9189);">SQL</div>
<svg class="r" style="left:836px;top:187px;" width="22" height="18" viewBox="0 0 22 18"><path d="M1,0 V17 H21" fill="none" stroke="#111" stroke-width="1.8"/><path d="M3,14 L9,7 L13,10 L19,3" fill="none" stroke="#111" stroke-width="2.4"/><path d="M15,2 H20 V7Z" fill="#111"/></svg>
<div class="t" style="left:865.00px;top:185.88px;font-size:18.5px;color:#337ab7;transform:scaleX(1.0135);">Statistics</div>
<svg class="r" style="left:955px;top:180px;" width="32" height="32" viewBox="0 0 32 32"><path d="M14.8,13.3 V8.3 Q14.8,6.3 16.6,6.3 Q18.3,6.3 18.3,8.3 V11.6 L23.8,12.6 Q25.5,13.2 25.3,15 L24,21.3 H16 Q15.5,19.8 13,18 L11,16.6 Q9.8,15.5 10.5,14.2 Q11.5,13 14.8,13.3 Z" fill="#e8e8e8" stroke="#111" stroke-width="1.5" stroke-linejoin="round"/><rect x="15.5" y="21.3" width="8.8" height="3.4" rx="0.8" fill="#111"/><circle cx="22.5" cy="22.6" r="0.5" fill="#ddd"/></svg>
<div class="t" style="left:988.00px;top:185.88px;font-size:18.5px;color:#337ab7;transform:scaleX(1.0312);">Dependencies</div>
<svg class="r" style="left:1125px;top:180px;" width="32" height="32" viewBox="0 0 32 32"><g transform="translate(0,31) scale(1,-1)"><path d="M14.8,13.3 V8.3 Q14.8,6.3 16.6,6.3 Q18.3,6.3 18.3,8.3 V11.6 L23.8,12.6 Q25.5,13.2 25.3,15 L24,21.3 H16 Q15.5,19.8 13,18 L11,16.6 Q9.8,15.5 10.5,14.2 Q11.5,13 14.8,13.3 Z" fill="#e8e8e8" stroke="#111" stroke-width="1.5" stroke-linejoin="round"/><rect x="15.5" y="21.3" width="8.8" height="3.4" rx="0.8" fill="#111"/><circle cx="22.5" cy="22.6" r="0.5" fill="#ddd"/></g></svg>
<div class="t" style="left:1159.00px;top:185.88px;font-size:18.5px;color:#337ab7;transform:scaleX(1.0380);">Dependents</div>
<svg class="r" style="left:1286px;top:188px;" width="12" height="20" viewBox="0 0 12 20"><path d="M3.5,1 H7.6 L5.8,6.8 L10.2,5.3 L4,18.3 L5.3,10.3 L1,9.9 Z" fill="#111" stroke="#111" stroke-width="0.6" stroke-linejoin="round"/></svg>
<div class="t" style="left:1304.00px;top:186.68px;font-size:18.5px;color:#111;transform:scaleX(1.0233);">Query - postgres on postgres@PostgreSQL 9.5 *</div>
<div class="r" style="left:2004px;top:170px;width:33px;height:32.5px;background:#e6e6e6;border:2px solid #9d9d9d;border-radius:5px"></div>
<svg class="r" style="left:2015px;top:181px;" width="14" height="12" viewBox="0 0 14 12"><path d="M2,1.5 L12,10.5 M12,1.5 L2,10.5" stroke="#222" stroke-width="3.2"/></svg>
<div class="r" style="left:464.5px;top:218.6px;width:137.5px;height:43.7px;background:linear-gradient(#fff,#e6e6e6);border:1px solid #c4c4c4;border-radius:5px"></div>
<div class="r" style="left:519.5px;top:219px;width:1px;height:43px;background:#cfcfcf"></div>
<div class="r" style="left:575.4px;top:219px;width:1px;height:43px;background:#cfcfcf"></div>
<svg class="r" style="left:481px;top:231px;" width="22" height="19" viewBox="0 0 22 19"><path d="M1.5,3 Q1.5,1.5 3,1.5 H8 L10,4 H16 Q17.5,4 17.5,5.5 V8 M1.5,3 V16.5 H16.5 L20.5,9 Q21,8 20,8 H6 Q5,8 4.5,9 L1.5,16.5" fill="none" stroke="#222" stroke-width="1.7" stroke-linejoin="round"/></svg>
<svg class="r" style="left:538px;top:230px;" width="19" height="19" viewBox="0 0 19 19"><path d="M1.5,1.5 H14 L17.5,5 V17.5 H1.5 Z" fill="none" stroke="#222" stroke-width="1.8"/><rect x="5" y="2" width="7" height="5" fill="none" stroke="#222" stroke-width="1.5"/><rect x="9" y="2" width="2" height="4" fill="#222"/><rect x="4.5" y="11" width="10" height="6" fill="none" stroke="#222" stroke-width="1.6"/></svg>
<svg class="r" style="left:583px;top:237.5px;" width="12" height="7" viewBox="0 0 12 7"><path d="M0,0 H12 L6,6.5 Z" fill="#222"/></svg>
<div class="r" style="left:609.7px;top:218.6px;width:81.59999999999991px;height:43.7px;background:linear-gradient(#fff,#e6e6e6);border:1px solid #c4c4c4;border-radius:5px"></div>
<div class="r" style="left:664.4px;top:219px;width:1px;height:43px;background:#cfcfcf"></div>
<svg class="r" style="left:626px;top:230px;" width="21" height="21" viewBox="0 0 21 21"><circle cx="8.5" cy="8.5" r="6.3" fill="none" stroke="#222" stroke-width="2.6"/><path d="M13,13 L19,19" stroke="#222" stroke-width="3" stroke-linecap="round"/></svg>
<svg class="r" style="left:672px;top:237.5px;" width="12" height="7" viewBox="0 0 12 7"><path d="M0,0 H12 L6,6.5 Z" fill="#222"/></svg>
<div class="r" style="left:697.7px;top:218.6px;width:110.69999999999993px;height:43.7px;background:#e4e4e4;border:1px solid #d6d6d6;border-radius:5px"></div>
<div class="r" style="left:753.6px;top:219px;width:1px;height:43px;background:#d6d6d6"></div>
<svg class="r" style="left:715px;top:230px;" width="22" height="21" viewBox="0 0 22 21"><path d="M1.5,6 L5,2 H10 V12 H1.5 Z" fill="none" stroke="#777" stroke-width="1.5"/><path d="M9,9 L12.5,5.5 H20 V20 H9 Z" fill="#e4e4e4" stroke="#777" stroke-width="1.5"/></svg>
<svg class="r" style="left:771px;top:229px;" width="20" height="22" viewBox="0 0 20 22"><rect x="1" y="1.5" width="12" height="17" fill="#777"/><rect x="3" y="0.5" width="8" height="2.5" fill="#e4e4e4" stroke="#777"/><path d="M8,8 H14 L18.5,12.5 V21 H8 Z" fill="#e4e4e4" stroke="#777" stroke-width="1.5"/></svg>
<div class="r" style="left:814.8px;top:218.6px;width:56.200000000000045px;height:43.7px;background:#e4e4e4;border:1px solid #d6d6d6;border-radius:5px"></div>
<svg class="r" style="left:834px;top:230px;" width="17" height="20" viewBox="0 0 17 20"><path d="M1,4 H16 M5,4 V2 Q5,1 6,1 H11 Q12,1 12,2 V4 M2.8,5 L3.5,18 Q3.6,19 4.5,19 H12.5 Q13.4,19 13.5,18 L14.2,5" fill="none" stroke="#777" stroke-width="1.8"/><path d="M6.5,7 V16 M8.5,7 V16 M10.5,7 V16" stroke="#777" stroke-width="1.4"/></svg>
<div class="r" style="left:878px;top:218.6px;width:55px;height:43.7px;background:linear-gradient(#fff,#e6e6e6);border:1px solid #c4c4c4;border-radius:5px"></div>
<svg class="r" style="left:886px;top:230px;" width="22" height="20" viewBox="0 0 22 20"><path d="M13,3.5 H3.5 Q1.5,3.5 1.5,5.5 V16.5 Q1.5,18.5 3.5,18.5 H14.5 Q16.5,18.5 16.5,16.5 V11" fill="none" stroke="#222" stroke-width="1.8"/><path d="M8,13.5 L9,9.5 L17,1.5 Q18,0.8 19,1.5 L20,2.5 Q20.7,3.5 20,4.5 L12,12.5 Z" fill="none" stroke="#222" stroke-width="1.6"/></svg>
<svg class="r" style="left:911px;top:237.5px;" width="12" height="7" viewBox="0 0 12 7"><path d="M0,0 H12 L6,6.5 Z" fill="#222"/></svg>
<div class="r" style="left:939px;top:218.6px;width:82.5px;height:43.7px;background:#e4e4e4;border:1px solid #d6d6d6;border-radius:5px"></div>
<div class="r" style="left:994px;top:219px;width:1px;height:43px;background:#d6d6d6"></div>
<svg class="r" style="left:958px;top:232px;" width="17" height="17" viewBox="0 0 17 17"><path d="M0.5,0.5 H16.5 L10.5,7.5 V16.5 L6.5,13 V7.5 Z" fill="#777"/></svg>
<svg class="r" style="left:1002px;top:237.5px;" width="12" height="7" viewBox="0 0 12 7"><path d="M0,0 H12 L6,6.5 Z" fill="#888"/></svg>
<div class="r" style="left:1028.6px;top:219px;width:126.4px;height:43px;background:#f2f2f2;border:1.5px solid #a9a9a9;border-radius:6px"></div>
<div class="t" style="left:1041.50px;top:231.93px;font-size:19.5px;color:#333;transform:scaleX(1.0948);">No limit</div>
<svg class="r" style="left:1138px;top:230px;" width="12" height="22" viewBox="0 0 12 22"><path d="M6,1 L11,8.5 H1 Z M1,13 H11 L6,20.5 Z" fill="#333"/></svg>
<div class="r" style="left:1162px;top:218.6px;width:81.40000000000009px;height:43.7px;background:linear-gradient(#fff,#e6e6e6);border:1px solid #c4c4c4;border-radius:5px"></div>
<div class="r" style="left:1216px;top:219px;width:1px;height:43px;background:#cfcfcf"></div>
<svg class="r" style="left:1182px;top:230px;" width="12" height="20" viewBox="0 0 12 20"><path d="M3.5,1 H7.6 L5.8,6.8 L10.2,5.3 L4,18.3 L5.3,10.3 L1,9.9 Z" fill="#222" stroke="#222" stroke-width="0.6" stroke-linejoin="round"/></svg>
<svg class="r" style="left:1224px;top:237.5px;" width="12" height="7" viewBox="0 0 12 7"><path d="M0,0 H12 L6,6.5 Z" fill="#222"/></svg>
<div class="r" style="left:1245px;top:218.6px;width:55.5px;height:43.7px;background:#e4e4e4;border:1px solid #d6d6d6;border-radius:5px"></div>
<svg class="r" style="left:1264px;top:233px;" width="16" height="16" viewBox="0 0 16 16"><rect width="16" height="16" fill="#777"/></svg>
<div class="r" style="left:1307.5px;top:218.6px;width:55.5px;height:43.7px;background:linear-gradient(#fff,#e6e6e6);border:1px solid #c4c4c4;border-radius:5px"></div>
<svg class="r" style="left:1316px;top:234px;" width="24" height="14" viewBox="0 0 24 14"><path d="M7,1 H21 L14,13 H1 Z" fill="#222"/><path d="M4,8 H11 L8,12.5 H1.5 Z" fill="#fff" stroke="#222" stroke-width="1"/></svg>
<svg class="r" style="left:1342px;top:237.5px;" width="12" height="7" viewBox="0 0 12 7"><path d="M0,0 H12 L6,6.5 Z" fill="#222"/></svg>
<div class="r" style="left:1370px;top:218.6px;width:55.5px;height:43.7px;background:linear-gradient(#fff,#e6e6e6);border:1px solid #c4c4c4;border-radius:5px"></div>
<svg class="r" style="left:1386px;top:231px;" width="21" height="18" viewBox="0 0 21 18"><path d="M8,0 H12 V7 H16 L10,13 L4,7 H8 Z" fill="#222"/><path d="M1,11 H6 L10,15 L14,11 H19.5 V17.5 H1 Z" fill="#222"/><rect x="14" y="14" width="1.5" height="1.5" fill="#e6e6e6"/><rect x="17" y="14" width="1.5" height="1.5" fill="#e6e6e6"/></svg>
<svg class="r" style="left:472px;top:272px;" width="30" height="30" viewBox="0 0 30 30"><g fill="#e67e22"><rect x="6" y="6" width="17.7" height="1.5" rx="0.7"/><rect x="6" y="24.5" width="17.7" height="1.5" rx="0.7"/><path d="M7.8,7.3 C8,12 10.5,14 13.5,15.7 C10.5,17.5 8,20 7.8,24.6 H21.9 C21.7,20 19.2,17.5 16.2,15.7 C19.2,14 21.7,12 21.9,7.3 Z"/></g><path d="M10,8.2 H19.8 L19.3,11.8 H10.5 Z" fill="#f7f7f7"/><path d="M14.9,17.3 C16.8,18.2 19,19.5 19.8,21 H10 C10.8,19.5 13,18.2 14.9,17.3 Z" fill="#f7f7f7"/></svg>
<div class="t" style="left:526.20px;top:279.88px;font-size:18.5px;color:#fff;font-weight:700;transform:scaleX(0.9511);-webkit-text-stroke:0">postgres on postgres@PostgreSQL 9.5</div>
<div class="t" style="left:485.00px;top:318.45px;font-size:19.8px;color:#999;font-family:'Liberation Mono',monospace;transform:scaleX(0.6734);">1</div>
<div class="t" style="left:527.30px;top:318.45px;font-size:19.8px;color:#770088;font-family:'Liberation Mono',monospace;">select</div>
<div class="t" style="left:610.11px;top:318.45px;font-size:19.8px;color:#222;font-family:'Liberation Mono',monospace;">*</div>
<div class="t" style="left:633.77px;top:318.45px;font-size:19.8px;color:#770088;font-family:'Liberation Mono',monospace;">from</div>
<div class="t" style="left:692.92px;top:318.45px;font-size:19.8px;color:#111;font-family:'Liberation Mono',monospace;">pg_class</div>
<div class="r" style="left:458px;top:511px;width:129px;height:42px;background:#fff;border-radius:5px 5px 0 0"></div>
<div class="r" style="left:674px;top:518px;width:1px;height:34px;background:#e0e0e0"></div>
<div class="r" style="left:783px;top:518px;width:1px;height:34px;background:#e0e0e0"></div>
<div class="r" style="left:921px;top:518px;width:1px;height:34px;background:#e0e0e0"></div>
<div class="t" style="left:470.00px;top:529.14px;font-size:19.6px;color:#222;transform:scaleX(1.0081);">Data Output</div>
<div class="t" style="left:601.00px;top:529.14px;font-size:19.6px;color:#337ab7;transform:scaleX(0.9489);">Explain</div>
<div class="t" style="left:688.00px;top:529.14px;font-size:19.6px;color:#337ab7;transform:scaleX(0.9175);">Messages</div>
<div class="t" style="left:795.70px;top:529.14px;font-size:19.6px;color:#337ab7;transform:scaleX(0.9937);">Query History</div>
<div class="r" style="left:458px;top:554px;width:1590px;height:703px;overflow:hidden">
<div class="r" style="left:0;top:0;width:1590px;height:56px;background:#e8e8e8"></div>
<div class="r" style="left:77.4px;top:56.00px;width:1492px;height:35.53px;background:#ffffff"></div>
<div class="r" style="left:77.4px;top:91.53px;width:1492px;height:35.53px;background:#f9f9f9"></div>
<div class="r" style="left:77.4px;top:127.06px;width:1492px;height:35.53px;background:#ffffff"></div>
<div class="r" style="left:77.4px;top:162.59px;width:1492px;height:35.53px;background:#f9f9f9"></div>
<div class="r" style="left:77.4px;top:198.12px;width:1492px;height:35.53px;background:#ffffff"></div>
<div class="r" style="left:77.4px;top:233.65px;width:1492px;height:35.53px;background:#f9f9f9"></div>
<div class="r" style="left:77.4px;top:269.18px;width:1492px;height:35.53px;background:#ffffff"></div>
<div class="r" style="left:77.4px;top:304.71px;width:1492px;height:35.53px;background:#f9f9f9"></div>
<div class="r" style="left:77.4px;top:340.24px;width:1492px;height:35.53px;background:#ffffff"></div>
<div class="r" style="left:77.4px;top:375.77px;width:1492px;height:35.53px;background:#f9f9f9"></div>
<div class="r" style="left:77.4px;top:411.30px;width:1492px;height:35.53px;background:#ffffff"></div>
<div class="r" style="left:77.4px;top:446.83px;width:1492px;height:35.53px;background:#f9f9f9"></div>
<div class="r" style="left:77.4px;top:482.36px;width:1492px;height:35.53px;background:#ffffff"></div>
<div class="r" style="left:77.4px;top:517.89px;width:1492px;height:35.53px;background:#f9f9f9"></div>
<div class="r" style="left:77.4px;top:553.42px;width:1492px;height:35.53px;background:#ffffff"></div>
<div class="r" style="left:77.4px;top:588.95px;width:1492px;height:35.53px;background:#f9f9f9"></div>
<div class="r" style="left:77.4px;top:624.48px;width:1492px;height:35.53px;background:#ffffff"></div>
<div class="r" style="left:77.4px;top:660.01px;width:1492px;height:35.53px;background:#f9f9f9"></div>
<div class="r" style="left:77.4px;top:695.54px;width:1492px;height:35.53px;background:#ffffff"></div>
<div class="r" style="left:0;top:56px;width:77.4px;height:650px;background:#e8e8e8"></div>
<div class="r" style="left:0;top:56px;width:1569px;height:2px;background:#d0d0d0"></div>
<div class="r" style="left:0;top:92px;width:1569px;height:2px;background:#d0d0d0"></div>
<div class="r" style="left:0;top:127px;width:1569px;height:2px;background:#d0d0d0"></div>
<div class="r" style="left:0;top:163px;width:1569px;height:2px;background:#d0d0d0"></div>
<div class="r" style="left:0;top:198px;width:1569px;height:2px;background:#d0d0d0"></div>
<div class="r" style="left:0;top:234px;width:1569px;height:2px;background:#d0d0d0"></div>
<div class="r" style="left:0;top:269px;width:1569px;height:2px;background:#d0d0d0"></div>
<div class="r" style="left:0;top:305px;width:1569px;height:2px;background:#d0d0d0"></div>
<div class="r" style="left:0;top:340px;width:1569px;height:2px;background:#d0d0d0"></div>
<div class="r" style="left:0;top:376px;width:1569px;height:2px;background:#d0d0d0"></div>
<div class="r" style="left:0;top:411px;width:1569px;height:2px;background:#d0d0d0"></div>
<div class="r" style="left:0;top:447px;width:1569px;height:2px;background:#d0d0d0"></div>
<div class="r" style="left:0;top:482px;width:1569px;height:2px;background:#d0d0d0"></div>
<div class="r" style="left:0;top:518px;width:1569px;height:2px;background:#d0d0d0"></div>
<div class="r" style="left:0;top:553px;width:1569px;height:2px;background:#d0d0d0"></div>
<div class="r" style="left:0;top:589px;width:1569px;height:2px;background:#d0d0d0"></div>
<div class="r" style="left:0;top:624px;width:1569px;height:2px;background:#d0d0d0"></div>
<div class="r" style="left:0;top:660px;width:1569px;height:2px;background:#d0d0d0"></div>
<div class="r" style="left:0;top:696px;width:1569px;height:2px;background:#d0d0d0"></div>
<div class="r" style="left:0;top:731px;width:1569px;height:2px;background:#d0d0d0"></div>
<div class="r" style="left:76.80px;top:0;width:1.3px;height:703px;background:#d0d0d0"></div>
<div class="r" style="left:186.20px;top:0;width:1.3px;height:703px;background:#d0d0d0"></div>
<div class="r" style="left:349.70px;top:0;width:1.3px;height:703px;background:#d0d0d0"></div>
<div class="r" style="left:448.20px;top:0;width:1.3px;height:703px;background:#d0d0d0"></div>
<div class="r" style="left:565.10px;top:0;width:1.3px;height:703px;background:#d0d0d0"></div>
<div class="r" style="left:681.20px;top:0;width:1.3px;height:703px;background:#d0d0d0"></div>
<div class="r" style="left:767.60px;top:0;width:1.3px;height:703px;background:#d0d0d0"></div>
<div class="r" style="left:900.20px;top:0;width:1.3px;height:703px;background:#d0d0d0"></div>
<div class="r" style="left:1056.70px;top:0;width:1.3px;height:703px;background:#d0d0d0"></div>
<div class="r" style="left:1169.20px;top:0;width:1.3px;height:703px;background:#d0d0d0"></div>
<div class="r" style="left:1282.70px;top:0;width:1.3px;height:703px;background:#d0d0d0"></div>
<div class="r" style="left:1419.70px;top:0;width:1.3px;height:703px;background:#d0d0d0"></div>
<div class="r" style="left:1564.50px;top:0;width:1.3px;height:703px;background:#d0d0d0"></div>
</div>
<svg class="r" style="left:515px;top:590px;" width="14" height="14" viewBox="0 0 14 14"><path d="M14,0 V14 H0 Z" fill="#777"/></svg>
<div class="t" style="left:544.90px;top:563.25px;font-size:17px;color:#333;transform:scaleX(1.0400);clip-path:inset(0 0 0 0)">relname</div>
<div class="t" style="left:544.90px;top:585.45px;font-size:17px;color:#333;transform:scaleX(1.0400);">name</div>
<div class="t" style="left:654.30px;top:563.25px;font-size:17px;color:#333;transform:scaleX(1.0400);clip-path:inset(0 0 0 0)">relnamespace</div>
<div class="t" style="left:654.30px;top:585.45px;font-size:17px;color:#333;transform:scaleX(1.0400);">oid</div>
<div class="t" style="left:817.80px;top:563.25px;font-size:17px;color:#333;transform:scaleX(1.0400);clip-path:inset(0 0 0 0)">reltype</div>
<div class="t" style="left:817.80px;top:585.45px;font-size:17px;color:#333;transform:scaleX(1.0400);">oid</div>
<div class="t" style="left:916.30px;top:563.25px;font-size:17px;color:#333;transform:scaleX(1.0400);clip-path:inset(0 0 0 0)">reloftype</div>
<div class="t" style="left:916.30px;top:585.45px;font-size:17px;color:#333;transform:scaleX(1.0400);">oid</div>
<div class="t" style="left:1033.20px;top:563.25px;font-size:17px;color:#333;transform:scaleX(1.0400);clip-path:inset(0 0 0 0)">relowner</div>
<div class="t" style="left:1033.20px;top:585.45px;font-size:17px;color:#333;transform:scaleX(1.0400);">oid</div>
<div class="t" style="left:1149.30px;top:563.25px;font-size:17px;color:#333;transform:scaleX(1.0400);clip-path:inset(0 0 0 0)">relam</div>
<div class="t" style="left:1149.30px;top:585.45px;font-size:17px;color:#333;transform:scaleX(1.0400);">oid</div>
<div class="t" style="left:1235.70px;top:563.25px;font-size:17px;color:#333;transform:scaleX(1.0400);clip-path:inset(0 0 0 0)">relfilenode</div>
<div class="t" style="left:1235.70px;top:585.45px;font-size:17px;color:#333;transform:scaleX(1.0400);">oid</div>
<div class="t" style="left:1368.30px;top:563.25px;font-size:17px;color:#333;transform:scaleX(1.0400);clip-path:inset(0 0 0 0)">reltablespace</div>
<div class="t" style="left:1368.30px;top:585.45px;font-size:17px;color:#333;transform:scaleX(1.0400);">oid</div>
<div class="t" style="left:1524.80px;top:563.25px;font-size:17px;color:#333;transform:scaleX(1.0400);clip-path:inset(0 0 0 0)">relpages</div>
<div class="t" style="left:1524.80px;top:585.45px;font-size:17px;color:#333;transform:scaleX(1.0400);">integer</div>
<div class="t" style="left:1637.30px;top:563.25px;font-size:17px;color:#333;transform:scaleX(1.0400);clip-path:inset(0 0 0 0)">reltuples</div>
<div class="t" style="left:1637.30px;top:585.45px;font-size:17px;color:#333;transform:scaleX(1.0400);">real</div>
<div class="t" style="left:1750.80px;top:563.25px;font-size:17px;color:#333;transform:scaleX(1.0400);clip-path:inset(0 0 0 0)">relallvisible</div>
<div class="t" style="left:1750.80px;top:585.45px;font-size:17px;color:#333;transform:scaleX(1.0400);">integer</div>
<div class="t" style="left:1887.80px;top:563.25px;font-size:17px;color:#333;transform:scaleX(1.0400);clip-path:inset(0 0 0 0)">reltoastrelid</div>
<div class="t" style="left:1887.80px;top:585.45px;font-size:17px;color:#333;transform:scaleX(1.0400);">oid</div>
<div class="t" style="left:2032.60px;top:563.25px;font-size:17px;color:#333;transform:scaleX(1.0400);clip-path:inset(0 0 0 0)">relhasindex</div>
<div class="t" style="left:2032.60px;top:585.45px;font-size:17px;color:#333;transform:scaleX(1.0400);">boolean</div>
<div class="t" style="left:492.08px;top:619.95px;font-size:17px;color:#222;">1</div>
<div class="t" style="left:544.20px;top:619.95px;font-size:17px;color:#222;transform:scaleX(1.0300);">data_milli...</div>
<div class="t" style="left:653.60px;top:619.95px;font-size:17px;color:#222;">2200</div>
<div class="t" style="left:817.10px;top:619.95px;font-size:17px;color:#222;">16395</div>
<div class="t" style="left:915.60px;top:619.95px;font-size:17px;color:#222;">0</div>
<div class="t" style="left:1032.50px;top:619.95px;font-size:17px;color:#222;">10</div>
<div class="t" style="left:1148.60px;top:619.95px;font-size:17px;color:#222;">0</div>
<div class="t" style="left:1235.00px;top:619.95px;font-size:17px;color:#222;">16394</div>
<div class="t" style="left:1367.60px;top:619.95px;font-size:17px;color:#222;">0</div>
<div class="t" style="left:1611.37px;top:619.95px;font-size:17px;color:#222;">1</div>
<div class="t" style="left:1724.87px;top:619.95px;font-size:17px;color:#222;">1</div>
<div class="t" style="left:1861.87px;top:619.95px;font-size:17px;color:#222;">0</div>
<div class="t" style="left:1887.10px;top:619.95px;font-size:17px;color:#222;">0</div>
<div class="t" style="left:492.08px;top:655.48px;font-size:17px;color:#222;">2</div>
<div class="t" style="left:544.20px;top:655.48px;font-size:17px;color:#222;transform:scaleX(1.0300);">nn_nn242...</div>
<div class="t" style="left:653.60px;top:655.48px;font-size:17px;color:#222;">2200</div>
<div class="t" style="left:817.10px;top:655.48px;font-size:17px;color:#222;">223739</div>
<div class="t" style="left:915.60px;top:655.48px;font-size:17px;color:#222;">0</div>
<div class="t" style="left:1032.50px;top:655.48px;font-size:17px;color:#222;">10</div>
<div class="t" style="left:1148.60px;top:655.48px;font-size:17px;color:#222;">0</div>
<div class="t" style="left:1235.00px;top:655.48px;font-size:17px;color:#222;">223737</div>
<div class="t" style="left:1367.60px;top:655.48px;font-size:17px;color:#222;">0</div>
<div class="t" style="left:1611.37px;top:655.48px;font-size:17px;color:#222;">0</div>
<div class="t" style="left:1724.87px;top:655.48px;font-size:17px;color:#222;">0</div>
<div class="t" style="left:1861.87px;top:655.48px;font-size:17px;color:#222;">0</div>
<div class="t" style="left:1887.10px;top:655.48px;font-size:17px;color:#222;">0</div>
<div class="t" style="left:492.08px;top:691.01px;font-size:17px;color:#222;">3</div>
<div class="t" style="left:544.20px;top:691.01px;font-size:17px;color:#222;transform:scaleX(1.0300);">hh_hh676...</div>
<div class="t" style="left:653.60px;top:691.01px;font-size:17px;color:#222;">2200</div>
<div class="t" style="left:817.10px;top:691.01px;font-size:17px;color:#222;">223732</div>
<div class="t" style="left:915.60px;top:691.01px;font-size:17px;color:#222;">0</div>
<div class="t" style="left:1032.50px;top:691.01px;font-size:17px;color:#222;">10</div>
<div class="t" style="left:1148.60px;top:691.01px;font-size:17px;color:#222;">0</div>
<div class="t" style="left:1235.00px;top:691.01px;font-size:17px;color:#222;">223730</div>
<div class="t" style="left:1367.60px;top:691.01px;font-size:17px;color:#222;">0</div>
<div class="t" style="left:1611.37px;top:691.01px;font-size:17px;color:#222;">0</div>
<div class="t" style="left:1724.87px;top:691.01px;font-size:17px;color:#222;">0</div>
<div class="t" style="left:1861.87px;top:691.01px;font-size:17px;color:#222;">0</div>
<div class="t" style="left:1887.10px;top:691.01px;font-size:17px;color:#222;">0</div>
<div class="t" style="left:492.08px;top:726.54px;font-size:17px;color:#222;">4</div>
<div class="t" style="left:544.20px;top:726.54px;font-size:17px;color:#222;transform:scaleX(1.0300);">oo_oo494...</div>
<div class="t" style="left:653.60px;top:726.54px;font-size:17px;color:#222;">2200</div>
<div class="t" style="left:817.10px;top:726.54px;font-size:17px;color:#222;">223746</div>
<div class="t" style="left:915.60px;top:726.54px;font-size:17px;color:#222;">0</div>
<div class="t" style="left:1032.50px;top:726.54px;font-size:17px;color:#222;">10</div>
<div class="t" style="left:1148.60px;top:726.54px;font-size:17px;color:#222;">0</div>
<div class="t" style="left:1235.00px;top:726.54px;font-size:17px;color:#222;">223744</div>
<div class="t" style="left:1367.60px;top:726.54px;font-size:17px;color:#222;">0</div>
<div class="t" style="left:1611.37px;top:726.54px;font-size:17px;color:#222;">0</div>
<div class="t" style="left:1724.87px;top:726.54px;font-size:17px;color:#222;">0</div>
<div class="t" style="left:1861.87px;top:726.54px;font-size:17px;color:#222;">0</div>
<div class="t" style="left:1887.10px;top:726.54px;font-size:17px;color:#222;">0</div>
<div class="t" style="left:492.08px;top:762.07px;font-size:17px;color:#222;">5</div>
<div class="t" style="left:544.20px;top:762.07px;font-size:17px;color:#222;transform:scaleX(1.0300);">cc_cc5501...</div>
<div class="t" style="left:653.60px;top:762.07px;font-size:17px;color:#222;">2200</div>
<div class="t" style="left:817.10px;top:762.07px;font-size:17px;color:#222;">223753</div>
<div class="t" style="left:915.60px;top:762.07px;font-size:17px;color:#222;">0</div>
<div class="t" style="left:1032.50px;top:762.07px;font-size:17px;color:#222;">10</div>
<div class="t" style="left:1148.60px;top:762.07px;font-size:17px;color:#222;">0</div>
<div class="t" style="left:1235.00px;top:762.07px;font-size:17px;color:#222;">223751</div>
<div class="t" style="left:1367.60px;top:762.07px;font-size:17px;color:#222;">0</div>
<div class="t" style="left:1611.37px;top:762.07px;font-size:17px;color:#222;">0</div>
<div class="t" style="left:1724.87px;top:762.07px;font-size:17px;color:#222;">0</div>
<div class="t" style="left:1861.87px;top:762.07px;font-size:17px;color:#222;">0</div>
<div class="t" style="left:1887.10px;top:762.07px;font-size:17px;color:#222;">0</div>
<div class="t" style="left:492.08px;top:797.60px;font-size:17px;color:#222;">6</div>
<div class="t" style="left:544.20px;top:797.60px;font-size:17px;color:#222;transform:scaleX(1.0300);">oo_oo506...</div>
<div class="t" style="left:653.60px;top:797.60px;font-size:17px;color:#222;">2200</div>
<div class="t" style="left:817.10px;top:797.60px;font-size:17px;color:#222;">223760</div>
<div class="t" style="left:915.60px;top:797.60px;font-size:17px;color:#222;">0</div>
<div class="t" style="left:1032.50px;top:797.60px;font-size:17px;color:#222;">10</div>
<div class="t" style="left:1148.60px;top:797.60px;font-size:17px;color:#222;">0</div>
<div class="t" style="left:1235.00px;top:797.60px;font-size:17px;color:#222;">223758</div>
<div class="t" style="left:1367.60px;top:797.60px;font-size:17px;color:#222;">0</div>
<div class="t" style="left:1611.37px;top:797.60px;font-size:17px;color:#222;">0</div>
<div class="t" style="left:1724.87px;top:797.60px;font-size:17px;color:#222;">0</div>
<div class="t" style="left:1861.87px;top:797.60px;font-size:17px;color:#222;">0</div>
<div class="t" style="left:1887.10px;top:797.60px;font-size:17px;color:#222;">0</div>
<div class="t" style="left:492.08px;top:833.13px;font-size:17px;color:#222;">7</div>
<div class="t" style="left:544.20px;top:833.13px;font-size:17px;color:#222;transform:scaleX(1.0300);">comp</div>
<div class="t" style="left:653.60px;top:833.13px;font-size:17px;color:#222;">2200</div>
<div class="t" style="left:817.10px;top:833.13px;font-size:17px;color:#222;">24600</div>
<div class="t" style="left:915.60px;top:833.13px;font-size:17px;color:#222;">0</div>
<div class="t" style="left:1032.50px;top:833.13px;font-size:17px;color:#222;">10</div>
<div class="t" style="left:1148.60px;top:833.13px;font-size:17px;color:#222;">0</div>
<div class="t" style="left:1235.00px;top:833.13px;font-size:17px;color:#222;">24598</div>
<div class="t" style="left:1367.60px;top:833.13px;font-size:17px;color:#222;">0</div>
<div class="t" style="left:1611.37px;top:833.13px;font-size:17px;color:#222;">0</div>
<div class="t" style="left:1724.87px;top:833.13px;font-size:17px;color:#222;">0</div>
<div class="t" style="left:1861.87px;top:833.13px;font-size:17px;color:#222;">0</div>
<div class="t" style="left:1887.10px;top:833.13px;font-size:17px;color:#222;">0</div>
<div class="t" style="left:492.08px;top:868.66px;font-size:17px;color:#222;">8</div>
<div class="t" style="left:544.20px;top:868.66px;font-size:17px;color:#222;transform:scaleX(1.0300);">mv1</div>
<div class="t" style="left:653.60px;top:868.66px;font-size:17px;color:#222;">2200</div>
<div class="t" style="left:817.10px;top:868.66px;font-size:17px;color:#222;">32798</div>
<div class="t" style="left:915.60px;top:868.66px;font-size:17px;color:#222;">0</div>
<div class="t" style="left:1032.50px;top:868.66px;font-size:17px;color:#222;">10</div>
<div class="t" style="left:1148.60px;top:868.66px;font-size:17px;color:#222;">0</div>
<div class="t" style="left:1235.00px;top:868.66px;font-size:17px;color:#222;">32796</div>
<div class="t" style="left:1367.60px;top:868.66px;font-size:17px;color:#222;">0</div>
<div class="t" style="left:1611.37px;top:868.66px;font-size:17px;color:#222;">0</div>
<div class="t" style="left:1724.87px;top:868.66px;font-size:17px;color:#222;">0</div>
<div class="t" style="left:1861.87px;top:868.66px;font-size:17px;color:#222;">0</div>
<div class="t" style="left:1887.10px;top:868.66px;font-size:17px;color:#222;">0</div>
<div class="t" style="left:492.08px;top:904.19px;font-size:17px;color:#222;">9</div>
<div class="t" style="left:544.20px;top:904.19px;font-size:17px;color:#222;transform:scaleX(1.0300);">hh_hh879...</div>
<div class="t" style="left:653.60px;top:904.19px;font-size:17px;color:#222;">2200</div>
<div class="t" style="left:817.10px;top:904.19px;font-size:17px;color:#222;">223767</div>
<div class="t" style="left:915.60px;top:904.19px;font-size:17px;color:#222;">0</div>
<div class="t" style="left:1032.50px;top:904.19px;font-size:17px;color:#222;">10</div>
<div class="t" style="left:1148.60px;top:904.19px;font-size:17px;color:#222;">0</div>
<div class="t" style="left:1235.00px;top:904.19px;font-size:17px;color:#222;">223765</div>
<div class="t" style="left:1367.60px;top:904.19px;font-size:17px;color:#222;">0</div>
<div class="t" style="left:1611.37px;top:904.19px;font-size:17px;color:#222;">0</div>
<div class="t" style="left:1724.87px;top:904.19px;font-size:17px;color:#222;">0</div>
<div class="t" style="left:1861.87px;top:904.19px;font-size:17px;color:#222;">0</div>
<div class="t" style="left:1887.10px;top:904.19px;font-size:17px;color:#222;">0</div>
<div class="t" style="left:487.37px;top:939.72px;font-size:17px;color:#222;">10</div>
<div class="t" style="left:544.20px;top:939.72px;font-size:17px;color:#222;transform:scaleX(1.0300);">breakpoint</div>
<div class="t" style="left:653.60px;top:939.72px;font-size:17px;color:#222;">2200</div>
<div class="t" style="left:817.10px;top:939.72px;font-size:17px;color:#222;">232354</div>
<div class="t" style="left:915.60px;top:939.72px;font-size:17px;color:#222;">0</div>
<div class="t" style="left:1032.50px;top:939.72px;font-size:17px;color:#222;">10</div>
<div class="t" style="left:1148.60px;top:939.72px;font-size:17px;color:#222;">0</div>
<div class="t" style="left:1235.00px;top:939.72px;font-size:17px;color:#222;">232352</div>
<div class="t" style="left:1367.60px;top:939.72px;font-size:17px;color:#222;">0</div>
<div class="t" style="left:1611.37px;top:939.72px;font-size:17px;color:#222;">0</div>
<div class="t" style="left:1724.87px;top:939.72px;font-size:17px;color:#222;">0</div>
<div class="t" style="left:1861.87px;top:939.72px;font-size:17px;color:#222;">0</div>
<div class="t" style="left:1887.10px;top:939.72px;font-size:17px;color:#222;">0</div>
<div class="t" style="left:487.96px;top:975.25px;font-size:17px;color:#222;">11</div>
<div class="t" style="left:544.20px;top:975.25px;font-size:17px;color:#222;transform:scaleX(1.0300);">pg_roles</div>
<div class="t" style="left:653.60px;top:975.25px;font-size:17px;color:#222;">11</div>
<div class="t" style="left:817.10px;top:975.25px;font-size:17px;color:#222;">11632</div>
<div class="t" style="left:915.60px;top:975.25px;font-size:17px;color:#222;">0</div>
<div class="t" style="left:1032.50px;top:975.25px;font-size:17px;color:#222;">10</div>
<div class="t" style="left:1148.60px;top:975.25px;font-size:17px;color:#222;">0</div>
<div class="t" style="left:1235.00px;top:975.25px;font-size:17px;color:#222;">11631</div>
<div class="t" style="left:1367.60px;top:975.25px;font-size:17px;color:#222;">0</div>
<div class="t" style="left:1611.37px;top:975.25px;font-size:17px;color:#222;">0</div>
<div class="t" style="left:1724.87px;top:975.25px;font-size:17px;color:#222;">0</div>
<div class="t" style="left:1861.87px;top:975.25px;font-size:17px;color:#222;">0</div>
<div class="t" style="left:1887.10px;top:975.25px;font-size:17px;color:#222;">0</div>
<div class="t" style="left:487.37px;top:1010.78px;font-size:17px;color:#222;">12</div>
<div class="t" style="left:544.20px;top:1010.78px;font-size:17px;color:#222;transform:scaleX(1.0300);">pg_shadow</div>
<div class="t" style="left:653.60px;top:1010.78px;font-size:17px;color:#222;">11</div>
<div class="t" style="left:817.10px;top:1010.78px;font-size:17px;color:#222;">11636</div>
<div class="t" style="left:915.60px;top:1010.78px;font-size:17px;color:#222;">0</div>
<div class="t" style="left:1032.50px;top:1010.78px;font-size:17px;color:#222;">10</div>
<div class="t" style="left:1148.60px;top:1010.78px;font-size:17px;color:#222;">0</div>
<div class="t" style="left:1235.00px;top:1010.78px;font-size:17px;color:#222;">11635</div>
<div class="t" style="left:1367.60px;top:1010.78px;font-size:17px;color:#222;">0</div>
<div class="t" style="left:1611.37px;top:1010.78px;font-size:17px;color:#222;">0</div>
<div class="t" style="left:1724.87px;top:1010.78px;font-size:17px;color:#222;">0</div>
<div class="t" style="left:1861.87px;top:1010.78px;font-size:17px;color:#222;">0</div>
<div class="t" style="left:1887.10px;top:1010.78px;font-size:17px;color:#222;">0</div>
<div class="t" style="left:487.37px;top:1046.31px;font-size:17px;color:#222;">13</div>
<div class="t" style="left:544.20px;top:1046.31px;font-size:17px;color:#222;transform:scaleX(1.0300);">t1_id_seq</div>
<div class="t" style="left:653.60px;top:1046.31px;font-size:17px;color:#222;">2200</div>
<div class="t" style="left:817.10px;top:1046.31px;font-size:17px;color:#222;">81311</div>
<div class="t" style="left:915.60px;top:1046.31px;font-size:17px;color:#222;">0</div>
<div class="t" style="left:1032.50px;top:1046.31px;font-size:17px;color:#222;">10</div>
<div class="t" style="left:1148.60px;top:1046.31px;font-size:17px;color:#222;">0</div>
<div class="t" style="left:1235.00px;top:1046.31px;font-size:17px;color:#222;">81310</div>
<div class="t" style="left:1367.60px;top:1046.31px;font-size:17px;color:#222;">0</div>
<div class="t" style="left:1611.37px;top:1046.31px;font-size:17px;color:#222;">1</div>
<div class="t" style="left:1724.87px;top:1046.31px;font-size:17px;color:#222;">1</div>
<div class="t" style="left:1861.87px;top:1046.31px;font-size:17px;color:#222;">0</div>
<div class="t" style="left:1887.10px;top:1046.31px;font-size:17px;color:#222;">0</div>
<div class="t" style="left:487.37px;top:1081.84px;font-size:17px;color:#222;">14</div>
<div class="t" style="left:544.20px;top:1081.84px;font-size:17px;color:#222;transform:scaleX(1.0300);">pg_group</div>
<div class="t" style="left:653.60px;top:1081.84px;font-size:17px;color:#222;">11</div>
<div class="t" style="left:817.10px;top:1081.84px;font-size:17px;color:#222;">11640</div>
<div class="t" style="left:915.60px;top:1081.84px;font-size:17px;color:#222;">0</div>
<div class="t" style="left:1032.50px;top:1081.84px;font-size:17px;color:#222;">10</div>
<div class="t" style="left:1148.60px;top:1081.84px;font-size:17px;color:#222;">0</div>
<div class="t" style="left:1235.00px;top:1081.84px;font-size:17px;color:#222;">11639</div>
<div class="t" style="left:1367.60px;top:1081.84px;font-size:17px;color:#222;">0</div>
<div class="t" style="left:1611.37px;top:1081.84px;font-size:17px;color:#222;">0</div>
<div class="t" style="left:1724.87px;top:1081.84px;font-size:17px;color:#222;">0</div>
<div class="t" style="left:1861.87px;top:1081.84px;font-size:17px;color:#222;">0</div>
<div class="t" style="left:1887.10px;top:1081.84px;font-size:17px;color:#222;">0</div>
<div class="t" style="left:487.37px;top:1117.37px;font-size:17px;color:#222;">15</div>
<div class="t" style="left:544.20px;top:1117.37px;font-size:17px;color:#222;transform:scaleX(1.0300);">pg_user</div>
<div class="t" style="left:653.60px;top:1117.37px;font-size:17px;color:#222;">11</div>
<div class="t" style="left:817.10px;top:1117.37px;font-size:17px;color:#222;">11643</div>
<div class="t" style="left:915.60px;top:1117.37px;font-size:17px;color:#222;">0</div>
<div class="t" style="left:1032.50px;top:1117.37px;font-size:17px;color:#222;">10</div>
<div class="t" style="left:1148.60px;top:1117.37px;font-size:17px;color:#222;">0</div>
<div class="t" style="left:1235.00px;top:1117.37px;font-size:17px;color:#222;">11642</div>
<div class="t" style="left:1367.60px;top:1117.37px;font-size:17px;color:#222;">0</div>
<div class="t" style="left:1611.37px;top:1117.37px;font-size:17px;color:#222;">0</div>
<div class="t" style="left:1724.87px;top:1117.37px;font-size:17px;color:#222;">0</div>
<div class="t" style="left:1861.87px;top:1117.37px;font-size:17px;color:#222;">0</div>
<div class="t" style="left:1887.10px;top:1117.37px;font-size:17px;color:#222;">0</div>
<div class="t" style="left:487.37px;top:1152.90px;font-size:17px;color:#222;">16</div>
<div class="t" style="left:544.20px;top:1152.90px;font-size:17px;color:#222;transform:scaleX(1.0300);">nn_nn254...</div>
<div class="t" style="left:653.60px;top:1152.90px;font-size:17px;color:#222;">2200</div>
<div class="t" style="left:817.10px;top:1152.90px;font-size:17px;color:#222;">223774</div>
<div class="t" style="left:915.60px;top:1152.90px;font-size:17px;color:#222;">0</div>
<div class="t" style="left:1032.50px;top:1152.90px;font-size:17px;color:#222;">10</div>
<div class="t" style="left:1148.60px;top:1152.90px;font-size:17px;color:#222;">0</div>
<div class="t" style="left:1235.00px;top:1152.90px;font-size:17px;color:#222;">223772</div>
<div class="t" style="left:1367.60px;top:1152.90px;font-size:17px;color:#222;">0</div>
<div class="t" style="left:1611.37px;top:1152.90px;font-size:17px;color:#222;">0</div>
<div class="t" style="left:1724.87px;top:1152.90px;font-size:17px;color:#222;">0</div>
<div class="t" style="left:1861.87px;top:1152.90px;font-size:17px;color:#222;">0</div>
<div class="t" style="left:1887.10px;top:1152.90px;font-size:17px;color:#222;">0</div>
<div class="t" style="left:487.37px;top:1188.43px;font-size:17px;color:#222;">17</div>
<div class="t" style="left:544.20px;top:1188.43px;font-size:17px;color:#222;transform:scaleX(1.0300);">xx_xx315...</div>
<div class="t" style="left:653.60px;top:1188.43px;font-size:17px;color:#222;">2200</div>
<div class="t" style="left:817.10px;top:1188.43px;font-size:17px;color:#222;">223781</div>
<div class="t" style="left:915.60px;top:1188.43px;font-size:17px;color:#222;">0</div>
<div class="t" style="left:1032.50px;top:1188.43px;font-size:17px;color:#222;">10</div>
<div class="t" style="left:1148.60px;top:1188.43px;font-size:17px;color:#222;">0</div>
<div class="t" style="left:1235.00px;top:1188.43px;font-size:17px;color:#222;">223779</div>
<div class="t" style="left:1367.60px;top:1188.43px;font-size:17px;color:#222;">0</div>
<div class="t" style="left:1611.37px;top:1188.43px;font-size:17px;color:#222;">0</div>
<div class="t" style="left:1724.87px;top:1188.43px;font-size:17px;color:#222;">0</div>
<div class="t" style="left:1861.87px;top:1188.43px;font-size:17px;color:#222;">0</div>
<div class="t" style="left:1887.10px;top:1188.43px;font-size:17px;color:#222;">0</div>
<div class="t" style="left:487.37px;top:1223.96px;font-size:17px;color:#222;">18</div>
<div class="t" style="left:544.20px;top:1223.96px;font-size:17px;color:#222;transform:scaleX(1.0300);">11_c1_seq</div>
<div class="t" style="left:653.60px;top:1223.96px;font-size:17px;color:#222;">2200</div>
<div class="t" style="left:817.10px;top:1223.96px;font-size:17px;color:#222;">100812</div>
<div class="t" style="left:915.60px;top:1223.96px;font-size:17px;color:#222;">0</div>
<div class="t" style="left:1032.50px;top:1223.96px;font-size:17px;color:#222;">10</div>
<div class="t" style="left:1148.60px;top:1223.96px;font-size:17px;color:#222;">0</div>
<div class="t" style="left:1235.00px;top:1223.96px;font-size:17px;color:#222;">100811</div>
<div class="t" style="left:1367.60px;top:1223.96px;font-size:17px;color:#222;">0</div>
<div class="t" style="left:1611.37px;top:1223.96px;font-size:17px;color:#222;">1</div>
<div class="t" style="left:1724.87px;top:1223.96px;font-size:17px;color:#222;">1</div>
<div class="t" style="left:1861.87px;top:1223.96px;font-size:17px;color:#222;">0</div>
<div class="t" style="left:1887.10px;top:1223.96px;font-size:17px;color:#222;">0</div>
<div class="r" style="left:2027px;top:610px;width:21px;height:647px;background:#fafafa;border-left:1px solid #e4e4e4"></div>
<div class="r" style="left:2032px;top:616px;width:11.5px;height:24px;background:#c1c1c1;border-radius:6px"></div>
<div class="r" style="left:458px;top:1257px;width:1590px;height:20px;background:#fafafa;border-top:1px solid #ececec"></div>
<div class="r" style="left:462.5px;top:1263px;width:565.5px;height:11px;background:#c1c1c1;border-radius:6px"></div>
<div class="r" style="left:458px;top:1277px;width:1590px;height:3px;background:#fbfbfb;border-top:1px solid #e6e6e6"></div>
<div class="r" style="left:2026px;top:1257px;width:22px;height:23px;background:#fff"></div>
</body></html>
